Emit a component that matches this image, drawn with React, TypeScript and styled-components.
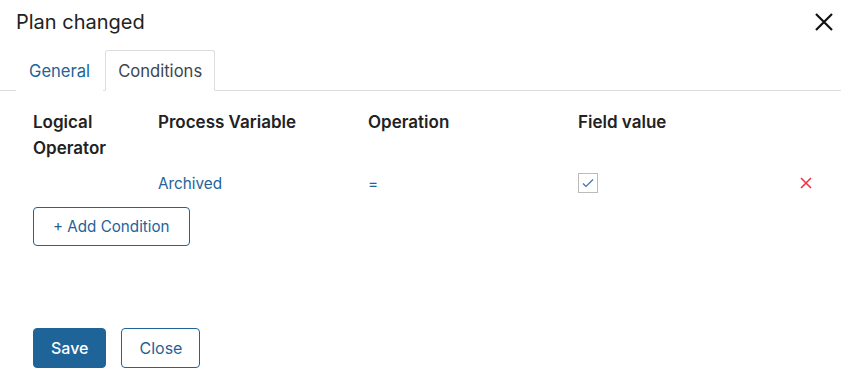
import React from "react";
import styled, { createGlobalStyle } from "styled-components";

const GlobalStyle = createGlobalStyle`
  html, body {
    margin: 0;
    padding: 0;
    background: #ffffff;
    font-family: Inter, "Noto Sans", sans-serif;
  }
`;

const Dialog = styled.div`
  display: flex;
  flex-direction: column;
  width: 841px;
  height: 372px;
  box-sizing: border-box;
  background: #fff;
`;

const Header = styled.div`
  display: flex;
  align-items: center;
  justify-content: space-between;
  height: 44px;
  padding: 0 8px 0 16px;
  box-sizing: border-box;
`;

const Title = styled.h1`
  margin: 0;
  font-size: 20px;
  font-weight: 400;
  color: #222;
  line-height: 1;
`;

const CloseIcon = styled.button`
  display: flex;
  align-items: center;
  justify-content: center;
  width: 18px;
  height: 18px;
  padding: 0;
  border: none;
  background: none;
`;

const TabStrip = styled.div`
  display: flex;
  margin-top: 6px;
  padding-left: 16px;
  border-bottom: 1px solid #dedede;
`;

const Tab = styled.div<{ $active?: boolean }>`
  display: flex;
  align-items: center;
  height: 41px;
  padding: 0 12px;
  margin-right: 2px;
  margin-bottom: -1px;
  box-sizing: border-box;
  font-size: 16.6px;
  color: ${(p) => (p.$active ? "#3e4650" : "#1f6397")};
  border: 1px solid ${(p) => (p.$active ? "#dedede" : "transparent")};
  border-bottom-color: ${(p) => (p.$active ? "#fff" : "transparent")};
  border-radius: 3px 3px 0 0;
  background: #fff;
`;

const Body = styled.div`
  padding: 18px 29px 0 33px;
`;

const Grid = styled.div`
  display: grid;
  grid-template-columns: 125px 210px 210px 1fr 12px;
  align-items: center;
`;

const HeadCell = styled.div`
  font-size: 17px;
  font-weight: 600;
  color: #222;
  line-height: 26px;
  align-self: start;
`;

const Cell = styled.div`
  display: flex;
  align-items: center;
  height: 24px;
  margin-top: 10px;
  font-size: 15.3px;
  color: #1f6397;
`;

const Checkbox = styled.span`
  display: inline-flex;
  align-items: center;
  justify-content: center;
  width: 20px;
  height: 20px;
  box-sizing: border-box;
  border: 1px solid #bbbbbb;
  background: #fff;
`;

const DeleteBtn = styled.span`
  display: flex;
  align-items: center;
  justify-content: center;
  width: 12px;
  height: 12px;
`;

const OutlineButton = styled.button`
  height: 39px;
  padding: 0 19px;
  font-family: Inter, "Noto Sans", sans-serif;
  font-size: 15.2px;
  color: #1f6397;
  background: #fff;
  border: 1px solid #1f6397;
  border-radius: 4px;
`;

const AddButton = styled(OutlineButton)`
  margin-top: 12px;
`;

const Footer = styled.div`
  display: flex;
  gap: 15px;
  margin-top: auto;
  padding: 0 0 4px 33px;
`;

const PrimaryButton = styled.button`
  height: 40px;
  padding: 0 17px;
  font-family: Inter, "Noto Sans", sans-serif;
  font-size: 16px;
  font-weight: 500;
  color: #fff;
  background: #1e6499;
  border: 1px solid #1e6499;
  border-radius: 4px;
`;

const SecondaryButton = styled(OutlineButton)`
  height: 40px;
  padding: 0 17px;
  font-size: 16px;
`;

const App: React.FC = () => {
  return (
    <Dialog>
      <GlobalStyle />
      <Header>
        <Title>Plan changed</Title>
        <CloseIcon aria-label="close">
          <svg width="18" height="18" viewBox="0 0 18 18">
            <path d="M1 1L17 17M17 1L1 17" stroke="#111" strokeWidth="2.2" />
          </svg>
        </CloseIcon>
      </Header>
      <TabStrip>
        <Tab>General</Tab>
        <Tab $active>Conditions</Tab>
      </TabStrip>
      <Body>
        <Grid>
          <HeadCell>
            Logical
            <br />
            Operator
          </HeadCell>
          <HeadCell>Process Variable</HeadCell>
          <HeadCell>Operation</HeadCell>
          <HeadCell>Field value</HeadCell>
          <HeadCell />

          <Cell />
          <Cell>Archived</Cell>
          <Cell>=</Cell>
          <Cell>
            <Checkbox>
              <svg width="14" height="14" viewBox="0 0 14 14">
                <path d="M2 7.5L5 10.5L12 3.5" fill="none" stroke="#3d6fb5" strokeWidth="1.2" />
              </svg>
            </Checkbox>
          </Cell>
          <Cell>
            <DeleteBtn>
              <svg width="12" height="12" viewBox="0 0 12 12">
                <path d="M1 1L11 11M11 1L1 11" stroke="#ef3340" strokeWidth="1.6" />
              </svg>
            </DeleteBtn>
          </Cell>
        </Grid>
        <AddButton>+ Add Condition</AddButton>
      </Body>
      <Footer>
        <PrimaryButton>Save</PrimaryButton>
        <SecondaryButton>Close</SecondaryButton>
      </Footer>
    </Dialog>
  );
};

export default App;
